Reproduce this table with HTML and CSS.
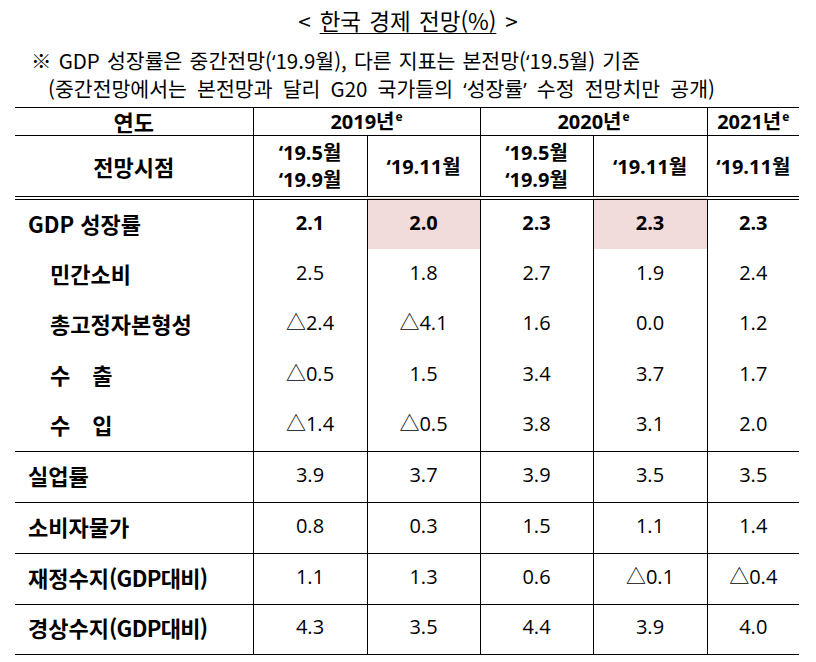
FILE: index.html
```html
<!DOCTYPE html>
<html lang="ko">
<head>
<meta charset="utf-8">
<title>한국 경제 전망</title>
<link rel="stylesheet" href="styles.css">
</head>
<body>
<div class="page">
  <h1 class="title"><span class="bracket">&lt;</span><span class="title-text">한국 경제 전망(%)</span><span class="bracket">&gt;</span></h1>
  <div class="notes">
    <p class="note note-main">※ GDP 성장률은 중간전망(<span class="q">‘</span>19.9월), 다른 지표는 본전망(<span class="q">‘</span>19.5월) 기준</p>
    <p class="note note-sub">(중간전망에서는 본전망과 달리 G20 국가들의 <span class="q">‘</span>성장률<span class="q">’</span> 수정 전망치만 공개)</p>
  </div>
  <table class="outlook">
    <colgroup>
      <col class="col-label">
      <col class="col-wide">
      <col class="col-narrow">
      <col class="col-narrow">
      <col class="col-wide">
      <col class="col-last">
    </colgroup>
    <thead>
      <tr class="head-year">
        <th class="head-label">연도</th>
        <th colspan="2">2019년<sup>e</sup></th>
        <th colspan="2">2020년<sup>e</sup></th>
        <th>2021년<sup>e</sup></th>
      </tr>
      <tr class="head-when">
        <th class="head-label">전망시점</th>
        <th>‘19.5월<br>‘19.9월</th>
        <th>‘19.11월</th>
        <th>‘19.5월<br>‘19.9월</th>
        <th>‘19.11월</th>
        <th>‘19.11월</th>
      </tr>
    </thead>
    <tbody class="gdp-block">
      <tr class="row-gdp">
        <th class="label">GDP 성장률</th>
        <td class="strong">2.1</td>
        <td class="strong hl">2.0</td>
        <td class="strong">2.3</td>
        <td class="strong hl">2.3</td>
        <td class="strong">2.3</td>
      </tr>
      <tr class="row-sub tall">
        <th class="label sub">민간소비</th>
        <td>2.5</td><td>1.8</td><td>2.7</td><td>1.9</td><td>2.4</td>
      </tr>
      <tr class="row-sub">
        <th class="label sub">총고정자본형성</th>
        <td>△2.4</td><td>△4.1</td><td>1.6</td><td>0.0</td><td>1.2</td>
      </tr>
      <tr class="row-sub tall">
        <th class="label sub">수　출</th>
        <td>△0.5</td><td>1.5</td><td>3.4</td><td>3.7</td><td>1.7</td>
      </tr>
      <tr class="row-sub">
        <th class="label sub">수　입</th>
        <td>△1.4</td><td>△0.5</td><td>3.8</td><td>3.1</td><td>2.0</td>
      </tr>
    </tbody>
    <tbody class="other-block">
      <tr class="row-other">
        <th class="label">실업률</th>
        <td>3.9</td><td>3.7</td><td>3.9</td><td>3.5</td><td>3.5</td>
      </tr>
      <tr class="row-other">
        <th class="label">소비자물가</th>
        <td>0.8</td><td>0.3</td><td>1.5</td><td>1.1</td><td>1.4</td>
      </tr>
      <tr class="row-other">
        <th class="label">재정수지<span class="paren">(GDP대비)</span></th>
        <td>1.1</td><td>1.3</td><td>0.6</td><td>△0.1</td><td>△0.4</td>
      </tr>
      <tr class="row-other row-last">
        <th class="label">경상수지<span class="paren">(GDP대비)</span></th>
        <td>4.3</td><td>3.5</td><td>4.4</td><td>3.9</td><td>4.0</td>
      </tr>
    </tbody>
  </table>
</div>
</body>
</html>
```

FILE: styles.css
```css
html, body {
  margin: 0;
  padding: 0;
  background: #ffffff;
}

body {
  color: #000000;
  font-family: "Noto Sans CJK KR", sans-serif;
}

.page {
  width: 816px;
  padding-top: 6px;
}

.title {
  margin: 0;
  display: flex;
  justify-content: center;
  gap: 9px;
  height: 28px;
  font-size: 22.5px;
  line-height: 28px;
  font-weight: normal;
}

.title-text {
  text-decoration: underline;
  text-decoration-thickness: 1px;
  text-underline-offset: 3px;
  word-spacing: 2px;
}

.notes {
  margin-top: 12px;
}

.note {
  margin: 0;
  height: 28px;
  font-size: 20.5px;
  line-height: 28px;
  white-space: nowrap;
}

.note .q {
  font-family: "Open Sans", sans-serif;
  line-height: 1;
}

.note-main {
  padding-left: 31px;
  word-spacing: 1.4px;
}

.note-sub {
  padding-left: 48px;
  word-spacing: 4.4px;
}

.outlook {
  margin: 5px 0 0 15px;
  width: 784px;
  table-layout: fixed;
  border-collapse: collapse;
  font-family: "Open Sans", "Noto Sans CJK KR", sans-serif;
  font-size: 20px;
}

.col-label { width: 238px; }
.col-wide { width: 114px; }
.col-narrow { width: 113px; }
.col-last { width: 92px; }

.outlook th,
.outlook td {
  padding: 0 0 4px;
  text-align: center;
  vertical-align: middle;
  line-height: 28px;
  border-left: 1px solid #000;
}

.outlook th:first-child {
  border-left: none;
}

.outlook thead th {
  font-weight: bold;
  line-height: 27px;
  padding: 0;
}

.outlook thead th.head-label {
  font-family: "Noto Sans CJK KR", sans-serif;
  font-size: 22px;
}

.head-year th {
  border-top: 1px solid #000;
  border-bottom: 1px solid #000;
  height: 27px;
}

.head-when th {
  height: 60px;
  border-bottom: 4px double #000;
}

.outlook sup {
  font-size: 12px;
  vertical-align: 8px;
  line-height: 0;
  margin-left: 1px;
}

.outlook .label {
  font-family: "Noto Sans CJK KR", sans-serif;
  font-size: 22px;
  text-align: left;
  font-weight: bold;
  padding-left: 13px;
  white-space: pre;
}

.outlook .label.sub {
  padding-left: 35px;
}

.outlook .label .paren {
  letter-spacing: -0.7px;
}

.outlook td {
  font-weight: normal;
}

.outlook td.strong {
  font-weight: bold;
}

.outlook td.hl {
  background: #f2dcdb;
}

.row-gdp th,
.row-gdp td {
  height: 45px;
}

.row-sub th,
.row-sub td {
  height: 46px;
}

.row-sub.tall th,
.row-sub.tall td {
  height: 47px;
}

.gdp-block tr:last-child th,
.gdp-block tr:last-child td {
  border-bottom: 1px solid #000;
}

.row-other th,
.row-other td {
  height: 46px;
  border-bottom: 1px solid #000;
}

.row-other.row-last th,
.row-other.row-last td {
  height: 44.5px;
}
```
